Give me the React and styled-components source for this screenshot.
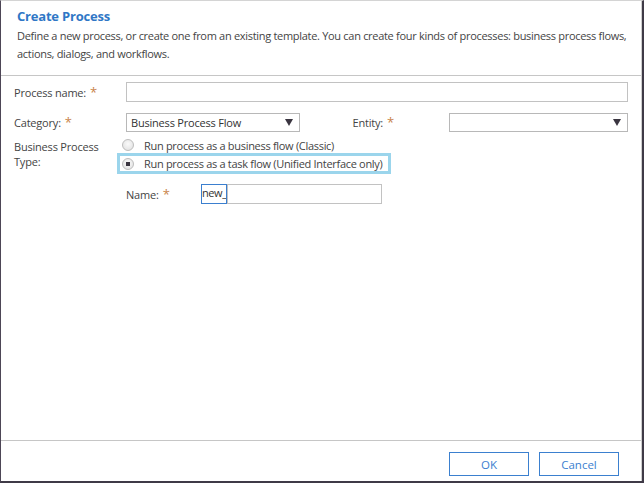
import styled, { createGlobalStyle } from "styled-components";

const Global = createGlobalStyle`
  html, body {
    margin: 0;
    padding: 0;
    background: #fff;
  }
  body {
    font-family: "Open Sans", "Liberation Sans", sans-serif;
    font-size: 12px;
    color: #444;
  }
`;

const Dialog = styled.div`
  box-sizing: border-box;
  width: 644px;
  height: 483px;
  display: flex;
  flex-direction: column;
  border-left: 1px solid #4d4656;
  border-right: 2px solid #3f3a47;
  border-bottom: 2px solid #3f3a47;
  border-top: 1px solid #d4d4d4;
  box-shadow: inset -1px 0 0 #cfcfcf;
  background: #fff;
`;

const Header = styled.div`
  padding: 6px 16px 0 16px;
  height: 68px;
  border-bottom: 1px solid #c6c6c6;
  margin-right: 1px;
`;

const Title = styled.h1`
  margin: 0;
  font-size: 13px;
  font-weight: 700;
  color: #2f77c6;
  line-height: 18px;
  letter-spacing: -0.2px;
`;

const Desc = styled.p`
  margin: 2px 0 0;
  font-size: 11px;
  line-height: 18px;
  color: #444;
  letter-spacing: -0.3px;
  white-space: nowrap;
`;

const Form = styled.div`
  flex: 1;
  padding: 6px 14px 0 13px;
  display: flex;
  flex-direction: column;
`;

const Row = styled.div`
  display: flex;
  align-items: ${({ top }) => (top ? "flex-start" : "center")};
  margin-top: ${({ gap }) => gap || 0}px;
`;

const Label = styled.div`
  width: ${({ w }) => w || 112}px;
  padding-left: ${({ pl }) => pl || 0}px;
  box-sizing: border-box;
  flex-shrink: 0;
  font-size: 11px;
  line-height: 15px;
  letter-spacing: -0.2px;
  color: #444;
`;

const Req = styled.span`
  color: #c9834a;
  margin-left: 4px;
  font-size: 13px;
`;

const TextInput = styled.div`
  box-sizing: border-box;
  width: ${({ w }) => w}px;
  height: ${({ h }) => h || 20}px;
  border: 1px solid #c2c2c2;
  background: #fff;
`;

const Select = styled.div`
  box-sizing: border-box;
  width: ${({ w }) => w}px;
  height: 19px;
  border: 1px solid #b8b8b8;
  display: flex;
  align-items: center;
  justify-content: space-between;
  padding: 0 6px 0 4px;
  font-size: 11px;
  letter-spacing: -0.2px;
  color: #333;
`;

const Arrow = styled.span`
  width: 0;
  height: 0;
  border-left: 4px solid transparent;
  border-right: 4px solid transparent;
  border-top: 7px solid #3a3540;
`;

const Options = styled.div`
  display: flex;
  flex-direction: column;
  margin-left: -9px;
  margin-top: -2px;
`;

const Option = styled.div`
  box-sizing: border-box;
  display: flex;
  align-items: center;
  height: ${({ active }) => (active ? 21 : 16)}px;
  width: ${({ active }) => (active ? "274px" : "auto")};
  padding-left: ${({ active }) => (active ? 2 : 5)}px;
  border: ${({ active }) => (active ? "3px solid #9bd5ec" : "none")};
  font-size: 11px;
  color: #444;
  white-space: nowrap;
  letter-spacing: -0.3px;
`;

const Radio = styled.span`
  box-sizing: border-box;
  flex-shrink: 0;
  width: 12px;
  height: 12px;
  border-radius: 50%;
  border: 1px solid #bdbdbd;
  background: radial-gradient(circle at 50% 40%, #fafafa 0%, #dedede 100%);
  margin-right: 10px;
  display: flex;
  align-items: center;
  justify-content: center;

  &::after {
    content: "";
    display: ${({ checked }) => (checked ? "block" : "none")};
    width: 4px;
    height: 4px;
    background: #3a3540;
  }
`;

const Prefix = styled.div`
  box-sizing: border-box;
  width: 26px;
  height: 20px;
  border: 1px solid #3b7fcf;
  font-size: 11px;
  line-height: 15px;
  letter-spacing: -0.4px;
  color: #333;
  overflow: hidden;
  white-space: nowrap;
`;

const Footer = styled.div`
  box-sizing: border-box;
  height: 41px;
  border-top: 1px solid #c6c6c6;
  margin-right: 1px;
  display: flex;
  justify-content: flex-end;
  align-items: flex-start;
  gap: 10px;
  padding: 11px 22px 0 0;
`;

const Button = styled.button`
  box-sizing: border-box;
  width: 80px;
  height: 24px;
  background: #fff;
  border: 1px solid #3b80cf;
  color: #3b80cf;
  font-family: inherit;
  font-size: 11.5px;
  padding: 0;
`;

export default function App() {
  return (
    <>
      <Global />
      <Dialog>
        <Header>
          <Title>Create Process</Title>
          <Desc>
            Define a new process, or create one from an existing template. You
            can create four kinds of processes: business process flows,
            <br />
            actions, dialogs, and workflows.
          </Desc>
        </Header>
        <Form>
          <Row>
            <Label>
              Process name:<Req>*</Req>
            </Label>
            <TextInput w={503} />
          </Row>
          <Row gap={11}>
            <Label>
              Category:<Req>*</Req>
            </Label>
            <Select w={174}>
              Business Process Flow
              <Arrow />
            </Select>
            <Label w={149} pl={53}>
              Entity:<Req>*</Req>
            </Label>
            <Select w={180}>
              <span />
              <Arrow />
            </Select>
          </Row>
          <Row gap={7} top>
            <Label>
              Business Process
              <br />
              Type:
            </Label>
            <Options>
              <Option>
                <Radio />
                Run process as a business flow (Classic)
              </Option>
              <Option active>
                <Radio checked />
                Run process as a task flow (Unified Interface only)
              </Option>
            </Options>
          </Row>
          <Row gap={10}>
            <Label w={112} />
            <Label w={75}>
              Name:<Req>*</Req>
            </Label>
            <Prefix>new_</Prefix>
            <TextInput w={155} />
          </Row>
        </Form>
        <Footer>
          <Button>OK</Button>
          <Button>Cancel</Button>
        </Footer>
      </Dialog>
    </>
  );
}
